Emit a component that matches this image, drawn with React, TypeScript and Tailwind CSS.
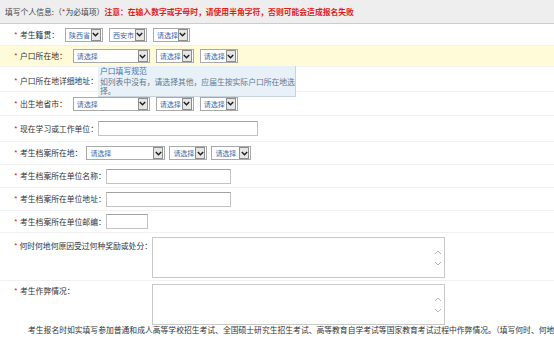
import type { ReactNode } from "react";

function Arrow() {
  return (
    <span className="flex h-[12px] w-[10px] shrink-0 items-center justify-center border border-[#8d8d8d] bg-[#e6e6e6]">
      <svg width="7" height="5" viewBox="0 0 7 5">
        <path d="M0.8 1 L3.5 3.8 L6.2 1" fill="none" stroke="#1d1d1d" strokeWidth="1.4" />
      </svg>
    </span>
  );
}

function Select({ text, className }: { text: string; className: string }) {
  return (
    <div className={`flex h-[14px] shrink-0 items-center justify-between overflow-hidden whitespace-nowrap border border-[#a9a9a9] bg-white pl-[3px] pr-[1px] ${className}`}>
      <span className="text-[7px] text-[#3b68a8]">{text}</span>
      <Arrow />
    </div>
  );
}

function Input({ className }: { className: string }) {
  return <div className={`h-[15px] shrink-0 border border-[#c3c3c3] border-t-[#a3a3a3] bg-white ${className}`} />;
}

function Label({ text }: { text: string }) {
  return (
    <span className="flex shrink-0 items-center whitespace-nowrap">
      <span className="w-[6px] text-[#e02020]">*</span>
      <span>{text}</span>
    </span>
  );
}

function TextBox() {
  return (
    <div className="flex h-[41px] w-[293px] flex-col items-end justify-center gap-[6px] border border-[#c9c9c9] bg-white pr-[2px]">
      <svg width="8" height="5" viewBox="0 0 8 5">
        <path d="M1 4 L4 1 L7 4" fill="none" stroke="#b5b5b5" strokeWidth="1" />
      </svg>
      <svg width="8" height="5" viewBox="0 0 8 5">
        <path d="M1 1 L4 4 L7 1" fill="none" stroke="#b5b5b5" strokeWidth="1" />
      </svg>
    </div>
  );
}

function Row({ className, children }: { className: string; children: ReactNode }) {
  return <div className={`flex border-b border-[#f1f1f1] pl-[14px] ${className}`}>{children}</div>;
}

export default function App() {
  return (
    <div className="h-[353px] w-[554px] overflow-hidden bg-white font-['Noto_Sans_CJK_SC',sans-serif] text-[7.8px] leading-[10px] text-[#333]">
      <div className="flex h-[24px] items-center whitespace-nowrap border-b border-[#cdcdcd] bg-[#eeeeee] pl-[5px]">
        <span className="text-[#444]">
          填写个人信息:（<span className="text-[#e02020]">*</span>为必填项）
        </span>
        <span className="font-bold text-[#e41b1b]">注意：在输入数字或字母时，请使用半角字符，否则可能会造成报名失败</span>
      </div>

      <Row className="h-[22px] items-center gap-[6px]">
        <Label text="考生籍贯：" />
        <Select text="陕西省" className="w-[38px]" />
        <Select text="西安市" className="w-[38px]" />
        <Select text="请选择" className="w-[37px]" />
      </Row>

      <Row className="h-[21px] items-center gap-[6px] bg-[#fffbd8]">
        <Label text="户口所在地：" />
        <Select text="请选择" className="w-[77px]" />
        <Select text="请选择" className="w-[38px]" />
        <Select text="请选择" className="w-[38px]" />
      </Row>

      <Row className="relative h-[25px] items-center pt-[3px]">
        <Label text="户口所在地详细地址：" />
        <div className="absolute left-[98px] top-[-1px] h-[31px] w-[198px] border-r border-b border-[#c8d3de] bg-[#e9f1f8] pl-[2px]">
          <div className="leading-[9px] text-[#3d73b5]">户口填写规范</div>
          <div className="pt-[2px] leading-[9px] text-[#62788f]">如列表中没有，请选择其他，应届生按实际户口所在地选择。</div>
        </div>
      </Row>

      <Row className="h-[24px] items-center gap-[6px]">
        <Label text="出生地省市：" />
        <Select text="请选择" className="w-[77px]" />
        <Select text="请选择" className="w-[38px]" />
        <Select text="请选择" className="w-[38px]" />
      </Row>

      <Row className="h-[26px] items-center">
        <Label text="现在学习或工作单位：" />
        <Input className="w-[160px]" />
      </Row>

      <Row className="h-[23px] items-center gap-[4px]">
        <Label text="考生档案所在地：" />
        <Select text="请选择" className="w-[79px]" />
        <Select text="请选择" className="w-[38px]" />
        <Select text="请选择" className="w-[40px]" />
      </Row>

      <Row className="h-[23px] items-center">
        <Label text="考生档案所在单位名称：" />
        <Input className="w-[125px]" />
      </Row>

      <Row className="h-[23px] items-center">
        <Label text="考生档案所在单位地址：" />
        <Input className="w-[125px]" />
      </Row>

      <Row className="h-[22px] items-center">
        <Label text="考生档案所在单位邮编：" />
        <Input className="w-[42px]" />
      </Row>

      <Row className="h-[48px] items-start">
        <div className="w-[138px] shrink-0 pt-[8px]">
          <Label text="何时何地何原因受过何种奖励或处分：" />
        </div>
        <div className="pt-[4px]">
          <TextBox />
        </div>
      </Row>

      <div className="flex h-[44px] items-start pl-[14px]">
        <div className="w-[138px] shrink-0 pt-[5px]">
          <Label text="考生作弊情况：" />
        </div>
        <div className="pt-[3px]">
          <TextBox />
        </div>
      </div>

      <div className="whitespace-nowrap pl-[28px]">
        考生报名时如实填写参加普通和成人高等学校招生考试、全国硕士研究生招生考试、高等教育自学考试等国家教育考试过程中作弊情况。（填写何时、何地
      </div>
    </div>
  );
}
